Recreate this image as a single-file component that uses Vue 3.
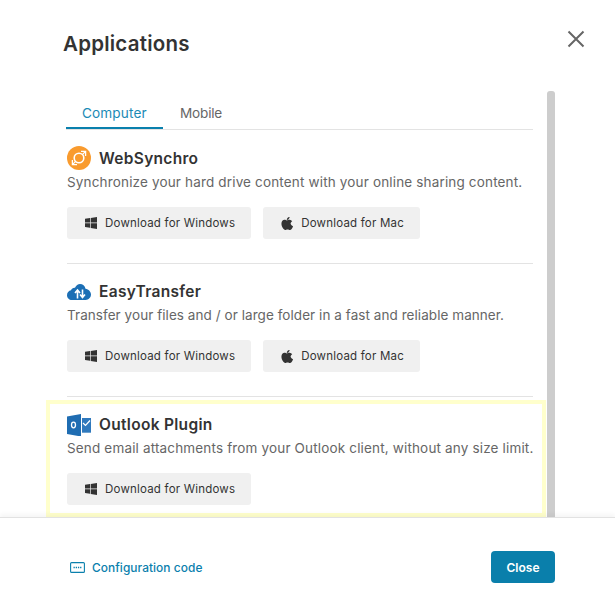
<script setup>
const apps = [
  { name: 'WebSynchro', icon: 'sync', desc: 'Synchronize your hard drive content with your online sharing content.', mac: true },
  { name: 'EasyTransfer', icon: 'cloud', desc: 'Transfer your files and / or large folder in a fast and reliable manner.', mac: true },
  { name: 'Outlook Plugin', icon: 'outlook', desc: 'Send email attachments from your Outlook client, without any size limit.', mac: false, highlight: true },
]
</script>

<template>
  <div class="modal">
    <header class="head">
      <h1 class="title">Applications</h1>
      <svg class="x" width="18" height="18" viewBox="0 0 18 18" aria-label="Close">
        <path d="M1.500 1.500 16.500 16.500M16.500 1.500 1.500 16.500" stroke="#666" stroke-width="2" fill="none" />
      </svg>
    </header>

    <div class="body">
      <div class="content">
        <nav class="tabs">
          <span class="tab active">Computer</span>
          <span class="tab mobile">Mobile</span>
        </nav>

        <section v-for="a in apps" :key="a.name" class="app" :class="[a.icon, { highlight: a.highlight }]">
          <div class="name-row">
            <svg v-if="a.icon === 'sync'" class="logo" width="24" height="24" viewBox="0 0 24 24">
              <circle cx="12" cy="12" r="12" fill="#f99b2e" />
              <circle cx="12" cy="12" r="4.800" fill="none" stroke="#fff" stroke-width="1.600" />
              <path d="M14 5.400h4.600v4.600M18.600 5.400l-3 3M10 18.600H5.400V14M5.400 18.600l3-3" fill="none" stroke="#fff" stroke-width="1.300" />
            </svg>
            <svg v-else-if="a.icon === 'cloud'" class="logo" width="24" height="24" viewBox="0 0 24 24">
              <path d="M5 21C2 21 0 18.800 0 16.200 0 13.600 1.800 11.700 4 11.300 4.600 9.500 6.200 8.500 8 8.700 9 6.400 11 5 13 5c2.700 0 5 2 5.500 4.700C21.700 10.200 24 12.800 24 15.600 24 18.700 21.500 21 18.700 21z" fill="#1c6fb5" />
              <path d="M10.500 19.500v-8M8 14l2.500-3 2.500 3M15.500 10.500v8M13 15.500l2.500 3 2.500-3" fill="none" stroke="#fff" stroke-width="1.600" />
            </svg>
            <svg v-else class="logo" width="24" height="24" viewBox="0 0 24 24">
              <path d="M0 4.500 14 2v22.500L0 22z" fill="#1f6db2" />
              <rect x="15" y="6" width="9" height="14.700" fill="#2f79bd" />
              <path d="M16 11l2.500 2.500L23 8.500" fill="none" stroke="#fff" stroke-width="1.200" />
              <ellipse cx="6.500" cy="13" rx="2" ry="2.800" fill="none" stroke="#fff" stroke-width="1.300" />
            </svg>
            <h2 class="name">{{ a.name }}</h2>
          </div>
          <p class="desc">{{ a.desc }}</p>
          <div class="actions">
            <button class="dl">
              <svg width="12" height="12" viewBox="0 0 12 12"><path d="M0 1.700 5 1v4.500H0zM5.700.9 12 0v5.500H5.700zM0 6.200h5v4.600l-5-.7zM5.700 6.200H12V12l-6.300-.9z" fill="#333" /></svg>
              <span>Download for Windows</span>
            </button>
            <button v-if="a.mac" class="dl">
              <svg width="12" height="13" viewBox="0 0 12 14"><path d="M9.900 7.400c0-1.300.6-2.200 1.700-2.900-.6-.9-1.600-1.400-2.800-1.500-1.200-.1-2.400.7-2.900.7-.5 0-1.600-.7-2.600-.7C1.600 3 0 4.500 0 7.300c0 .9.2 1.700.5 2.600.4 1.200 2 4.100 3.600 4.100.8 0 1.400-.6 2.500-.6s1.600.6 2.500.6c1.700 0 3-2.700 3.400-3.900-2.100-1-2.600-2.400-2.600-2.700zM8 1.900C8.900.9 8.800 0 8.800 0c-.8 0-1.700.5-2.200 1.100-.6.6-.9 1.400-.8 2.200.9 0 1.600-.5 2.200-1.400z" fill="#333" /></svg>
              <span>Download for Mac</span>
            </button>
          </div>
        </section>
      </div>
      <div class="scrollbar"></div>
    </div>

    <footer class="foot">
      <a class="code">
        <svg width="15" height="11" viewBox="0 0 15 11"><rect x=".6" y=".6" width="13.800" height="9.800" rx="1" fill="none" stroke="#0a80ad" stroke-width="1.100" /><path d="M3.500 5.500h8" stroke="#0a80ad" stroke-width="1.300" stroke-dasharray="1.300 .9" /></svg>
        <span>Configuration code</span>
      </a>
      <button class="close">Close</button>
    </footer>
  </div>
</template>

<style>
html, body { margin: 0; background: #fff; }
</style>

<style scoped>
.modal {
  width: 615px;
  height: 611px;
  display: flex;
  flex-direction: column;
  font-family: "Inter", "Liberation Sans", sans-serif;
  color: #333;
  overflow: hidden;
  box-sizing: border-box;
}
.head {
  height: 91px;
  flex: none;
  box-sizing: border-box;
  padding: 30px 30px 0 63px;
  display: flex;
  justify-content: space-between;
  align-items: flex-start;
}
.title { margin: 0; font-size: 20.500px; line-height: 27px; font-weight: 600; color: #333; letter-spacing: .22px; }
.body {
  flex: none;
  height: 426px;
  display: flex;
  padding-left: 46px;
  overflow: hidden;
}
.content { width: 500px; flex: none; }
.tabs {
  margin: 0 13px 0 20px;
  height: 39px;
  box-sizing: border-box;
  display: flex;
  border-bottom: 1px solid #e3e3e3;
}
.tab {
  font-size: 13.600px;
  line-height: 20px;
  height: 38px;
  box-sizing: border-box;
  padding: 12px 16px 0;
  color: #666;
}
.active {
  color: #1a8ab5;
  border-bottom: 2px solid #0a80ad;
  width: 97px;
  flex: none;
  letter-spacing: .12px;
}
.mobile { padding-left: 17px; letter-spacing: -.2px; }
.app {
  margin: 0 13px 0 21px;
  padding: 15px 0 0;
  border-bottom: 1px solid #e3e3e3;
  box-sizing: border-box;
  height: 133px;
}
.tabs + .app { height: 134px; padding-top: 16px; }
.app.highlight {
  margin: 3px 0 0;
  padding: 8px 0 0 17px;
  border: 4px solid #ffffcc;
  height: 117px;
  width: 500px;
}
.name-row { display: flex; align-items: center; gap: 8px; height: 24px; }
.logo { flex: none; }
.name { margin: 2px 0 0; font-size: 15.500px; line-height: 24px; font-weight: 600; color: #333; letter-spacing: .3px; }
.desc { margin: 2px 0 0; font-size: 13.500px; line-height: 20px; color: #666; white-space: nowrap; letter-spacing: .16px; }
.cloud .desc { letter-spacing: .06px; }
.actions { display: flex; gap: 12px; margin-top: 15px; }
.dl {
  height: 32px;
  border: 0;
  border-radius: 3px;
  background: #f0f0f0;
  display: flex;
  align-items: center;
  gap: 8px;
  padding: 0 16px 0 18px;
  font: 400 11.500px "Inter", sans-serif;
  letter-spacing: .2px;
  color: #333;
}
.scrollbar { width: 8px; height: 426px; margin-left: 1px; background: #cdcdcd; border-radius: 3px 3px 0 0; }
.foot {
  flex: 1;
  border-top: 1px solid #e2e2e2;
  box-shadow: 0 -3px 4px rgba(0, 0, 0, .04);
  position: relative;
  display: flex;
  justify-content: space-between;
  align-items: flex-start;
  padding: 33px 60px 0 70px;
  box-sizing: border-box;
}
.code { display: flex; align-items: center; gap: 7px; font-size: 11.900px; font-weight: 500; color: #0a80ad; height: 32px; letter-spacing: .06px; }
.close {
  width: 64px;
  height: 32px;
  border: 0;
  border-radius: 4px;
  background: #0a7fab;
  color: #fff;
  font: 600 12px "Inter", sans-serif;
}
</style>
